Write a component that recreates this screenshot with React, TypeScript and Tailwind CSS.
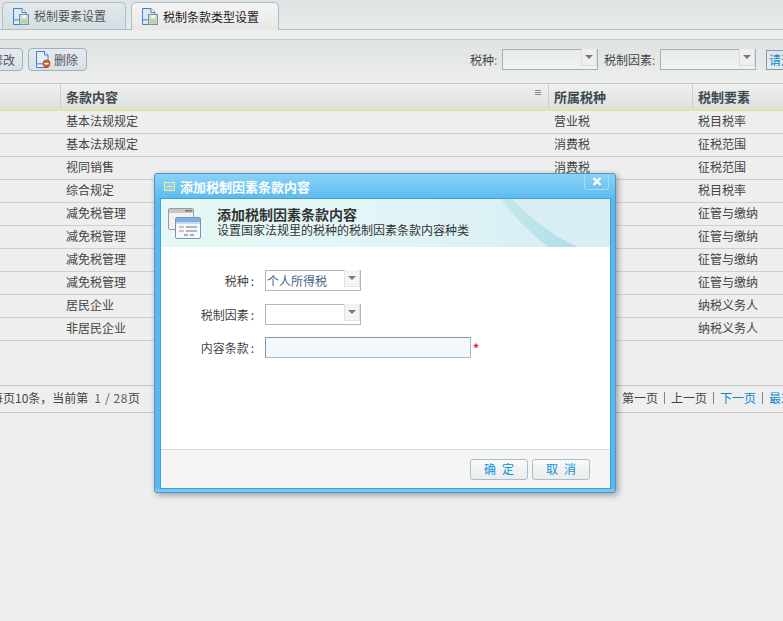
import React from "react";

const font = { fontFamily: '"Noto Sans CJK SC","Liberation Sans",sans-serif' };

function DocFloppy() {
  return (
    <svg width="17" height="17" viewBox="0 0 17 17" className="shrink-0">
      <path d="M1.5 .5H10L14 4.5V16.5H1.5Z" fill="#dbe8f6" stroke="#4a7fc0" />
      <path d="M10 .5V4.5H14" fill="#f4f8fc" stroke="#4a7fc0" />
      <rect x="2" y="11" width="6" height="1.5" fill="#6aa8e0" />
      <rect x="7.5" y="6.5" width="9" height="10" fill="#c9d6d8" stroke="#7d939a" />
      <rect x="10" y="7" width="4" height="3" fill="#f2f5f6" />
      <rect x="9" y="12" width="6" height="3" fill="#b6d77a" />
    </svg>
  );
}

function DocDelete() {
  return (
    <svg width="16" height="17" viewBox="0 0 16 17" className="shrink-0">
      <path d="M1.5 .5H9.5L13 4V16.5H1.5Z" fill="#e3edf8" stroke="#4a7fc0" />
      <path d="M9.5 .5V4H13" fill="#f6f9fc" stroke="#4a7fc0" />
      <rect x="2" y="12" width="6" height="1.5" fill="#6aa8e0" />
      <circle cx="11.5" cy="12.5" r="3.5" fill="#e0691f" stroke="#b84a10" />
      <rect x="9.5" y="12" width="4" height="1.4" fill="#fff" />
    </svg>
  );
}

function WindowsIcon() {
  return (
    <svg width="33" height="31" viewBox="0 0 33 31" className="shrink-0">
      <rect x=".5" y=".5" width="25" height="21" rx="1.5" fill="#f2f2f2" stroke="#9a9a9a" />
      <rect x="1" y="1" width="24" height="4" fill="#c6c6c6" />
      <rect x="17" y="2" width="7" height="1.5" fill="#777" />
      <rect x="7.5" y="9.5" width="25" height="21" rx="1.5" fill="#f4f7fb" stroke="#7c93b5" />
      <rect x="8" y="10" width="24" height="4" fill="#7fb0e8" />
      <rect x="8" y="14" width="24" height="2" fill="#c5daf2" />
      <rect x="11" y="18" width="5" height="2" fill="#c4c4c4" />
      <rect x="18" y="18" width="11" height="2" fill="#b5b5b5" />
      <rect x="11" y="22" width="5" height="2" fill="#c4c4c4" />
      <rect x="18" y="22" width="11" height="2" fill="#b5b5b5" />
      <rect x="16" y="26" width="4" height="2" fill="#aaa" />
      <rect x="22" y="26" width="4" height="2" fill="#aaa" />
    </svg>
  );
}

function SelectBox({ value, active }: { value?: string; active?: boolean }) {
  return (
    <div className="flex h-[21px] w-[96px] shrink-0 border-x border-b border-x-[#a5bcc6] border-b-[#a5bcc6] bg-white">
      <div className={`flex flex-1 items-center whitespace-nowrap border-t border-[#a5bcc6] pl-[1px] text-[12px] ${active ? "text-[#3f6388]" : ""}`}>{value}</div>
      <div className="flex h-[17px] w-[16px] items-center justify-center border-x border-b border-[#e2e2e2] bg-[#f4f4f4]">
        <div className="h-0 w-0 border-x-[4px] border-t-[4px] border-x-transparent border-t-[#777]" />
      </div>
    </div>
  );
}

function ToolSelect() {
  return (
    <div className="flex h-[21px] w-[96px] shrink-0 border-x border-b border-[#9db4bd] bg-gradient-to-b from-[#e8eaea] to-[#f2f3f3]">
      <div className="flex-1 border-t border-[#9db4bd]" />
      <div className="flex h-[17px] w-[16px] items-center justify-center border-x border-b border-[#dcdcdc] bg-[#efefef]">
        <div className="h-0 w-0 border-x-[4px] border-t-[4px] border-x-transparent border-t-[#777]" />
      </div>
    </div>
  );
}

const rows = [
  { id: 1, a: "基本法规规定", b: "营业税", c: "税目税率" },
  { id: 2, a: "基本法规规定", b: "消费税", c: "征税范围" },
  { id: 3, a: "视同销售", b: "消费税", c: "征税范围" },
  { id: 4, a: "综合规定", b: "消费税", c: "税目税率" },
  { id: 5, a: "减免税管理", b: "", c: "征管与缴纳" },
  { id: 6, a: "减免税管理", b: "", c: "征管与缴纳" },
  { id: 7, a: "减免税管理", b: "", c: "征管与缴纳" },
  { id: 8, a: "减免税管理", b: "", c: "征管与缴纳" },
  { id: 9, a: "居民企业", b: "", c: "纳税义务人" },
  { id: 10, a: "非居民企业", b: "", c: "纳税义务人" },
];

const cols = "grid grid-cols-[60px_488px_144px_91px]";

function Sep() {
  return <div className="h-[12px] w-px bg-[#8a7a9a]" />;
}

export default function App() {
  return (
    <div style={font} className="relative h-[621px] w-[783px] overflow-hidden bg-[#eeeeee] text-[12px] text-[#444]">
      {/* Tabs */}
      <div className="flex h-[30px] items-end gap-[5px] border-b border-[#a9bfc9] bg-gradient-to-b from-[#dfe3e3] to-[#e9ebeb] pl-[2px]">
        <div className="flex h-[27px] w-[124px] items-center gap-[5px] rounded-t-[5px] border border-b-0 border-[#a9bfc9] bg-gradient-to-b from-[#e6e9ea] to-[#d2dfe4] pl-[9px] text-[#555]">
          <DocFloppy />
          <span>税制要素设置</span>
        </div>
        <div className="mb-[-1px] flex h-[28px] w-[148px] items-center gap-[5px] rounded-t-[5px] border border-b-0 border-[#a9bfc9] bg-gradient-to-b from-[#f4f4f4] to-[#e8e8e8] pl-[9px] text-[#222]">
          <DocFloppy />
          <span>税制条款类型设置</span>
        </div>
      </div>
      <div className="h-[9px]" />
      {/* Toolbar */}
      <div className="flex h-[45px] items-center border-y border-[#c2c8c8] bg-gradient-to-b from-[#dfe3e3] to-[#eeeeee] pb-[4px]">
        <button className="ml-[-35px] flex h-[23px] w-[58px] shrink-0 items-center justify-end whitespace-nowrap rounded-[4px] border border-[#a0b2bc] bg-gradient-to-b from-[#e6eaee] to-[#d8e0e8] pr-[7px] text-[#555]">修改</button>
        <button className="ml-[5px] flex h-[23px] w-[59px] shrink-0 items-center gap-[3px] whitespace-nowrap rounded-[4px] border border-[#a0b2bc] bg-gradient-to-b from-[#e6eaee] to-[#d8e0e8] pl-[6px] text-[#555]">
          <DocDelete />
          <span>删除</span>
        </button>
        <span className="ml-[383px] w-[32px] shrink-0 whitespace-nowrap">税种<span className="text-[#99803d]">:</span></span>
        <ToolSelect />
        <span className="ml-[6px] w-[56px] shrink-0 whitespace-nowrap">税制因素<span className="text-[#99803d]">:</span></span>
        <ToolSelect />
        <button className="ml-[10px] flex h-[20px] w-[40px] shrink-0 items-center whitespace-nowrap border border-[#7a9cb8] pl-[2px] text-[#0a86d0]">请选择</button>
      </div>
      {/* Table */}
      <div className={`${cols} h-[27px] border-b-2 border-b-[#dfe89a] bg-gradient-to-b from-[#f0f0f0] to-[#dedfdf] text-[13px] font-bold text-[#3e4a4e]`}>
        <div />
        <div className="relative flex items-center border-l border-[#cfcfcf] pl-[5px]">
          条款内容
          <div className="absolute right-[7px] top-[6px] flex h-[5px] w-[6px] flex-col justify-between">
            <div className="h-px bg-[#888]" />
            <div className="h-px bg-[#888]" />
            <div className="h-px bg-[#888]" />
          </div>
        </div>
        <div className="flex items-center border-l border-[#cfcfcf] pl-[5px]">所属税种</div>
        <div className="flex items-center border-l border-[#cfcfcf] pl-[5px]">税制要素</div>
      </div>
      {rows.map((r) => (
        <div key={r.id} className={`${cols} h-[23px] items-center border-b border-[#cfcfcf] pb-[2px]`}>
          <div />
          <div className="pl-[6px]">{r.a}</div>
          <div className="pl-[6px]">{r.b}</div>
          <div className="pl-[6px]">{r.c}</div>
        </div>
      ))}
      <div className="h-[44px]" />
      {/* Pager */}
      <div className="flex h-[28px] items-center justify-between whitespace-nowrap border-y border-[#c4c4c4] pb-[2px]">
        <span className="ml-[-9px] shrink-0">每页10条{"\uFF0C"}当前第<span className="ml-[6px] tracking-[0.6px] text-[#55606a]">1 / 28</span>页</span>
        <div className="mr-[-22px] flex shrink-0 items-center gap-[6px]">
          <span>第一页</span>
          <Sep />
          <span>上一页</span>
          <Sep />
          <span className="text-[#0a86d0]">下一页</span>
          <Sep />
          <span className="text-[#0a86d0]">最末页</span>
        </div>
      </div>

      {/* Dialog */}
      <div className="absolute left-[154px] top-[173px] flex h-[320px] w-[462px] flex-col rounded-[3px] border border-[#4a98c8] bg-[#5cb8ec] shadow-[2px_2px_6px_rgba(0,0,0,0.35)]">
        <div className="relative flex h-[24px] shrink-0 items-center gap-[5px] rounded-t-[2px] bg-gradient-to-b from-[#8ed5f8]/90 to-[#5dbcf0]/90 pl-[9px] pt-[1px] text-[13px] font-bold text-white">
          <div className="flex h-[9px] w-[11px] items-center justify-center border border-[#f3ef86] bg-[#8fd0f0]">
            <div className="h-px w-[5px] bg-[#f3ef86]" />
          </div>
          <span>添加税制因素条款内容</span>
          <div className="absolute right-[6px] top-0 flex h-[16px] w-[25px] items-center justify-center rounded-b-[3px] border-x border-b border-[#a8dcf6]">
            <svg width="10" height="9" viewBox="0 0 10 9">
              <path d="M1.5 1L8.5 8M8.5 1L1.5 8" stroke="#fff" strokeWidth="2.4" />
            </svg>
          </div>
        </div>
        <div className="ml-[5px] mr-[4px] flex min-h-0 flex-1 flex-col border border-[#3f9fd8] bg-white">
          <div className="relative flex h-[48px] shrink-0 items-center gap-[16px] overflow-hidden bg-gradient-to-r from-[#e6f8f5] via-[#e2f5f6] to-[#d5ecf3] pl-[7px] text-[#333]">
            <svg className="absolute right-0 top-0" width="112" height="48" viewBox="0 0 112 48">
              <defs>
                <linearGradient id="sw" x1="0" y1="0" x2="1" y2="0">
                  <stop offset="0" stopColor="#c4e8ec" />
                  <stop offset="1" stopColor="#b2dde7" />
                </linearGradient>
              </defs>
              <path d="M3 0H15C34 22 58 38 80 48H50C32 34 14 16 3 0Z" fill="url(#sw)" />
              <path d="M15 0H112V48H80C58 38 34 22 15 0Z" fill="#d9eef4" />
            </svg>
            <WindowsIcon />
            <div className="relative flex flex-col pb-[2px]">
              <span className="text-[14px] font-bold leading-[15px] text-[#333]">添加税制因素条款内容</span>
              <span className="text-[12px] leading-[15px]">设置国家法规里的税种的税制因素条款内容种类</span>
            </div>
          </div>
          <div className="flex flex-1 flex-col pl-[39px] pt-[23px]">
            <div className="flex h-[21px] items-center gap-[10px]">
              <span className="w-[55px] whitespace-nowrap text-right">税种<span className="ml-[2px] mr-[1px]">:</span></span>
              <SelectBox value="个人所得税" active />
            </div>
            <div className="mt-[13px] flex h-[21px] items-center gap-[10px]">
              <span className="w-[55px] whitespace-nowrap text-right">税制因素<span className="ml-[2px] mr-[1px]">:</span></span>
              <SelectBox />
            </div>
            <div className="mt-[12px] flex h-[21px] items-center gap-[10px]">
              <span className="w-[55px] whitespace-nowrap text-right">内容条款<span className="ml-[2px] mr-[1px]">:</span></span>
              <div className="h-[21px] w-[206px] border border-[#a5bcc6] border-t-[#7f98ab] border-l-[#7f98ab] bg-[#f4f8fc]" />
              <span className="ml-[-8px] text-[12px] font-bold text-[#f0103c]">*</span>
            </div>
          </div>
          <div className="flex h-[39px] shrink-0 items-center justify-end gap-[4px] border-t border-[#d5d9dc] bg-[#f5f5f5] pr-[20px]">
            <button className="h-[21px] w-[58px] rounded-[3px] border border-[#a5c0cc] bg-gradient-to-b from-[#fafafa] via-[#f2f2f2] to-[#ececec] pl-[6px] tracking-[6px] text-[#0a94dc]">确定</button>
            <button className="h-[21px] w-[58px] rounded-[3px] border border-[#a5c0cc] bg-gradient-to-b from-[#fafafa] via-[#f2f2f2] to-[#ececec] pl-[6px] tracking-[6px] text-[#0a94dc]">取消</button>
          </div>
        </div>
        <div className="h-[3px] shrink-0 rounded-b-[2px] bg-[#78c7f3]" />
      </div>
    </div>
  );
}
